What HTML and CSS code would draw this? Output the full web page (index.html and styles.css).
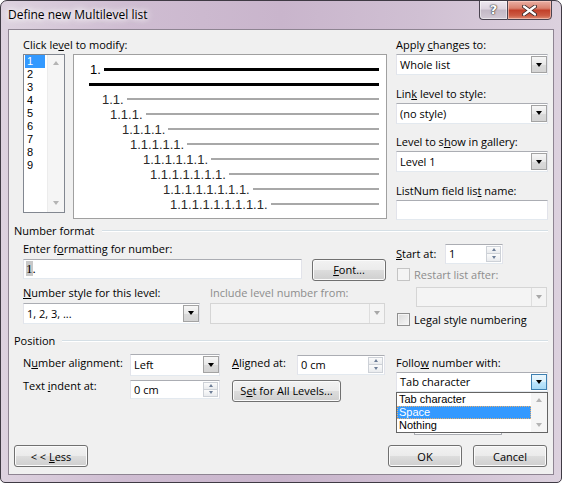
FILE: index.html
```html
<!DOCTYPE html>
<html>
<head>
<meta charset="utf-8">
<title>Define new Multilevel list</title>
<link rel="stylesheet" href="styles.css">
</head>
<body>
<div class="window">
  <div class="titlebar">
    <span class="title">Define new Multilevel list</span>
    <div class="caption-btns">
      <div class="cbtn help"><span>?</span></div>
      <div class="cbtn close">
        <svg width="15" height="11" viewBox="0 0 15 11"><path d="M2 1.5 L13 9.5 M13 1.5 L2 9.5" stroke="#3a2a2a" stroke-width="4" stroke-linecap="round" fill="none"/><path d="M2 1.5 L13 9.5 M13 1.5 L2 9.5" stroke="#ffffff" stroke-width="2.2" stroke-linecap="round" fill="none"/></svg>
      </div>
    </div>
  </div>
  <div class="client">
    <div class="top">
      <div class="levels">
        <div class="lbl">Click le<u>v</u>el to modify:</div>
        <div class="levels-row">
          <div class="listbox">
            <div class="items">
              <div class="item sel">1</div>
              <div class="item">2</div>
              <div class="item">3</div>
              <div class="item">4</div>
              <div class="item">5</div>
              <div class="item">6</div>
              <div class="item">7</div>
              <div class="item">8</div>
              <div class="item">9</div>
            </div>
            <div class="vscroll"><i class="sa up"></i><i class="sa dn"></i></div>
          </div>
          <div class="preview">
            <div class="pr p1"><span class="n first">1.</span><span class="ln black"></span></div>
            <div class="pr p2"><span class="ln black"></span></div>
            <div class="pr p3"><span class="n">1.1.</span><span class="ln"></span></div>
            <div class="pr p4"><span class="n">1.1.1.</span><span class="ln"></span></div>
            <div class="pr p5"><span class="n">1.1.1.1.</span><span class="ln"></span></div>
            <div class="pr p6"><span class="n">1.1.1.1.1.</span><span class="ln"></span></div>
            <div class="pr p7"><span class="n">1.1.1.1.1.1.</span><span class="ln"></span></div>
            <div class="pr p8"><span class="n">1.1.1.1.1.1.1.</span><span class="ln"></span></div>
            <div class="pr p9"><span class="n">1.1.1.1.1.1.1.1.</span><span class="ln"></span></div>
            <div class="pr p10"><span class="n">1.1.1.1.1.1.1.1.1.</span><span class="ln"></span></div>
          </div>
        </div>
      </div>
      <div class="side">
        <div class="field">
          <div class="lbl">Apply <u>c</u>hanges to:</div>
          <div class="combo"><span class="val">Whole list</span><span class="drop"></span></div>
        </div>
        <div class="field">
          <div class="lbl">Lin<u>k</u> level to style:</div>
          <div class="combo"><span class="val">(no style)</span><span class="drop"></span></div>
        </div>
        <div class="field">
          <div class="lbl">Level to s<u>h</u>ow in gallery:</div>
          <div class="combo"><span class="val">Level 1</span><span class="drop"></span></div>
        </div>
        <div class="field">
          <div class="lbl">ListNum field lis<u>t</u> name:</div>
          <div class="textbox listnum"></div>
        </div>
      </div>
    </div>

    <div class="group-head"><span>Number format</span><i></i></div>
    <div class="nf">
      <div class="nf-left">
        <div class="lbl">Enter f<u>o</u>rmatting for number:</div>
        <div class="fmt-row">
          <div class="textbox fmt"><span class="hl">1</span>.</div>
          <div class="btn font-btn"><u>F</u>ont...</div>
        </div>
        <div class="style-row">
          <div class="col">
            <div class="lbl"><u>N</u>umber style for this level:</div>
            <div class="combo"><span class="val">1, 2, 3, ...</span><span class="drop"></span></div>
          </div>
          <div class="col">
            <div class="lbl disabled">Include level number from:</div>
            <div class="combo dis"><span class="val"></span><span class="ddrop"></span></div>
          </div>
        </div>
      </div>
      <div class="nf-right">
        <div class="start-row">
          <div class="lbl start-lbl"><u>S</u>tart at:</div>
          <div class="spin start"><span class="val">1</span><div class="sb"><i class="up"></i><i class="dn"></i></div></div>
        </div>
        <div class="check-row restart">
          <span class="cb dis"></span><span class="lbl disabled">Restart list after:</span>
        </div>
        <div class="combo dis restart-combo"><span class="val"></span><span class="ddrop"></span></div>
        <div class="check-row legal">
          <span class="cb"></span><span class="lbl">Le<u>g</u>al style numbering</span>
        </div>
      </div>
    </div>

    <div class="group-head pos-head"><span>Position</span><i></i></div>
    <div class="pos">
      <div class="pos-left">
        <div class="pos-row r1">
          <div class="lbl w107">N<u>u</u>mber alignment:</div>
          <div class="combo align"><span class="val">Left</span><span class="drop"></span></div>
          <div class="lbl w65"><u>A</u>ligned at:</div>
          <div class="spin aligned"><span class="val">0 cm</span><div class="sb"><i class="up"></i><i class="dn"></i></div></div>
        </div>
        <div class="pos-row r2">
          <div class="lbl w107 up2">Text <u>i</u>ndent at:</div>
          <div class="spin indent"><span class="val">0 cm</span><div class="sb"><i class="up"></i><i class="dn"></i></div></div>
          <div class="btn setall">S<u>e</u>t for All Levels...</div>
        </div>
      </div>
      <div class="pos-right">
        <div class="lbl follow-lbl">Follo<u>w</u> number with:</div>
        <div class="combo follow">
          <span class="val">Tab character</span><span class="drop hot"></span>
          <div class="dropdown">
            <div class="dd-items">
              <div class="dd-item">Tab character</div>
              <div class="dd-item sel">Space</div>
              <div class="dd-item">Nothing</div>
            </div>
            <div class="dd-scroll"><i class="sa up"></i><i class="sa dn"></i></div>
          </div>
        </div>
        <div class="hidden-box"></div>
      </div>
    </div>

    <div class="bottom">
      <div class="btn">&lt;&nbsp;&lt;&nbsp;<u>L</u>ess</div>
      <div class="right-btns">
        <div class="btn">OK</div>
        <div class="btn">Cancel</div>
      </div>
    </div>
  </div>
</div>
</body>
</html>
```

FILE: styles.css
```css
* { box-sizing: border-box; }
html, body { margin: 0; padding: 0; }
body {
  width: 562px;
  height: 483px;
  font-family: "Open Sans", "Noto Sans", sans-serif;
  font-size: 11px;
  color: #000;
  background: #ffffff;
}
u { text-decoration: underline; text-underline-offset: 1px; }

.window {
  width: 562px;
  height: 483px;
  border: 1px solid #3f3a44;
  border-radius: 7px 7px 5px 5px;
  padding: 0 7px 7px;
  background: linear-gradient(90deg, #ddd2df 0%, #cfbdd2 22%, #c9b5cc 50%, #d0c0d3 75%, #dcd1de 100%);
  display: flex;
  flex-direction: column;
  overflow: hidden;
}

.titlebar {
  height: 28px;
  display: flex;
  justify-content: space-between;
  align-items: flex-start;
}
.title {
  margin-top: 6px;
  font-size: 12px;
  line-height: 16px;
  color: #000;
  text-shadow: 0 0 5px #fff, 0 0 8px #fff, 0 0 10px #fff;
}
.caption-btns {
  display: flex;
  margin-top: -1px;
  margin-right: 2px;
}
.cbtn {
  height: 20px;
  border: 1px solid #4a4350;
  display: flex;
  align-items: center;
  justify-content: center;
}
.help {
  width: 28px;
  border-right: none;
  border-radius: 0 0 0 4px;
  background: linear-gradient(#efe9f0 0%, #dcd3de 45%, #c3b8c6 50%, #d2c9d4 100%);
  box-shadow: inset 0 0 0 1px rgba(255,255,255,0.5);
}
.help span {
  font-family: "DejaVu Sans", sans-serif;
  font-weight: bold;
  font-size: 13px;
  line-height: 14px;
  color: #fff;
  text-shadow: 0 0 1px #333, 0 0 1px #333, 0 0 2px #555;
}
.close {
  width: 45px;
  border-radius: 0 0 4px 0;
  background: linear-gradient(#eab0a4 0%, #d9826f 40%, #c2402a 52%, #cc5a43 80%, #dd8b73 100%);
  box-shadow: inset 0 0 0 1px rgba(255,210,200,0.6);
}
.close svg { display: block; }

.client {
  height: 446px;
  border: 1px solid #8e8492;
  background: #f0f0f0;
  padding: 7px 5px 0 5px;
  display: flex;
  flex-direction: column;
}

.lbl {
  height: 15px;
  line-height: 15px;
  white-space: nowrap;
}
.disabled { color: #8d8d8d; }

/* top section */
.top {
  display: flex;
  gap: 9px;
  margin-left: 9px;
}
.levels { width: 364px; }
.levels-row {
  display: flex;
  gap: 8px;
  margin-top: 2px;
  align-items: flex-start;
}
.listbox {
  width: 42px;
  height: 159px;
  border: 1px solid #828790;
  background: #fff;
  display: flex;
  gap: 2px;
}
.items {
  width: 21px;
  padding-left: 1px;
}
.item {
  height: 13px;
  line-height: 13px;
  padding-left: 2px;
  font-family: "Liberation Sans", Arial, sans-serif;
  font-size: 11px;
}
.item.sel { background: #3399ff; color: #fff; }
.vscroll {
  width: 17px;
  background: #f5f5f5;
  border-left: 1px solid #ececec;
  display: flex;
  flex-direction: column;
  justify-content: space-between;
  align-items: center;
  padding: 6px 0 7px;
}
.sa { display: block; width: 0; height: 0; border-left: 3.5px solid transparent; border-right: 3.5px solid transparent; }
.sa.up { border-bottom: 4px solid #b4b4b4; }
.sa.dn { border-top: 4px solid #b4b4b4; }

.preview {
  width: 314px;
  height: 165px;
  border: 1px solid #a0a0a0;
  background: #fff;
  padding: 6.5px 7px 0 0;
}
.pr {
  height: 15px;
  display: flex;
  align-items: center;
  gap: 3px;
}
.pr .n {
  font-family: "Liberation Sans", Arial, sans-serif;
  font-size: 13px;
  line-height: 15px;
  color: #2a2a2a;
  white-space: nowrap;
}
.pr .n.first { color: #000; }
.pr .ln { flex: 1; height: 2px; background: #a8a8a8; }
.pr .ln.black { height: 3px; background: #000; }
.p1 { padding-left: 16px; }
.p2 { padding-left: 15px; }
.p3 { padding-left: 28px; }
.p4 { padding-left: 36px; }
.p5 { padding-left: 48px; }
.p6 { padding-left: 56px; }
.p7 { padding-left: 69px; }
.p8 { padding-left: 76px; }
.p9 { padding-left: 89px; }
.p10 { padding-left: 96px; }

.side {
  width: 152px;
  display: flex;
  flex-direction: column;
  gap: 10.5px;
}
.field .combo, .field .textbox { margin-top: 2px; }

/* controls */
.combo {
  position: relative;
  height: 21px;
  border: 1px solid #abadb3;
  border-color: #abadb3 #e2e3ea #e3e9ef #e2e3ea;
  background: #fff;
  display: flex;
  align-items: center;
}
.combo .val {
  flex: 1;
  padding-left: 3px;
  line-height: 19px;
  white-space: nowrap;
}
.combo .drop {
  width: 16px;
  height: 17px;
  border: 1px solid #a3a3a3;
  background: linear-gradient(#f7f7f7, #e8e8e8 50%, #dadada 51%, #d4d4d4);
  display: flex;
  align-items: center;
  justify-content: center;
}
.combo .drop::after {
  content: "";
  border-left: 3.5px solid transparent;
  border-right: 3.5px solid transparent;
  border-top: 4px solid #000;
}
.combo .drop.hot {
  border-color: #3c7fb1;
  background: linear-gradient(#eaf6fd, #d9f0fc 50%, #bee6fd 51%, #a7d9f5);
}
.combo.dis {
  background: #f4f4f4;
  border: 1px solid #d5d5d5;
  align-items: stretch;
}
.combo .ddrop {
  width: 15px;
  border-left: 1px solid #dedede;
  display: flex;
  align-items: center;
  justify-content: center;
}
.combo .ddrop::after {
  content: "";
  border-left: 3.5px solid transparent;
  border-right: 3.5px solid transparent;
  border-top: 4px solid #a8a8a8;
}

.textbox {
  height: 20px;
  border: 1px solid #abadb3;
  border-color: #abadb3 #e2e3ea #e3e9ef #e2e3ea;
  background: #fff;
}

.btn {
  height: 22px;
  border: 1px solid #707070;
  border-radius: 3px;
  background: linear-gradient(#f2f2f2 0%, #ebebeb 49%, #dddddd 50%, #cfcfcf 100%);
  box-shadow: inset 0 0 0 1px #fbfbfb;
  display: flex;
  align-items: center;
  justify-content: center;
  white-space: nowrap;
  line-height: 15px;
}

.spin {
  height: 20px;
  border: 1px solid #abadb3;
  border-color: #abadb3 #e2e3ea #e3e9ef #e2e3ea;
  background: #fff;
  display: flex;
  align-items: stretch;
}
.spin .val {
  flex: 1;
  padding-left: 3px;
  line-height: 18px;
}
.sb {
  width: 16px;
  display: flex;
  flex-direction: column;
  padding: 1px 1px 1px 0;
}
.sb i {
  flex: 1;
  border: 1px solid #cdd1d7;
  background: linear-gradient(#fbfbfb, #e9ebee);
  display: flex;
  align-items: center;
  justify-content: center;
}
.sb i + i { margin-top: -1px; }
.sb i::after {
  content: "";
  border-left: 2.5px solid transparent;
  border-right: 2.5px solid transparent;
}
.sb .up::after { border-bottom: 3px solid #6d7d97; }
.sb .dn::after { border-top: 3px solid #6d7d97; }

.cb {
  width: 13px;
  height: 13px;
  border: 1px solid #8f8f8f;
  background: linear-gradient(135deg, #dadada, #f7f7f7);
  box-shadow: inset 0 0 0 1px #f4f4f4;
  flex: none;
}
.cb.dis { border-color: #c4c4c4; background: #f4f4f4; box-shadow: none; }

/* group headers */
.group-head {
  margin-top: 3.5px;
  height: 15px;
  display: flex;
  align-items: center;
  gap: 7px;
}
.group-head span { line-height: 15px; white-space: nowrap; }
.group-head i {
  flex: 1;
  height: 2px;
  border-top: 1px solid #d5dfe5;
  border-bottom: 1px solid #ffffff;
  margin-top: 1px;
}

/* number format */
.nf {
  height: 95px;
  display: flex;
  gap: 9px;
  margin-left: 9px;
}
.nf-left { width: 364px; padding-top: 3px; }
.fmt-row {
  display: flex;
  gap: 10px;
  margin-top: 2.5px;
  align-items: flex-start;
}
.fmt {
  width: 279px;
  padding-left: 2px;
  font-family: "Liberation Serif", serif;
  font-size: 13px;
  line-height: 18px;
}
.fmt .hl { background: #c8c8c8; }
.font-btn { width: 74px; height: 22px; }
.style-row {
  display: flex;
  gap: 10px;
  margin-top: 4.5px;
}
.style-row .col:first-child { width: 177px; }
.style-row .col:last-child { width: 175px; }
.style-row .combo { margin-top: 2.5px; }

.nf-right { width: 152px; padding-top: 5.5px; }
.start-row { display: flex; align-items: center; }
.start-lbl { width: 49px; }
.spin.start { width: 58px; }
.check-row {
  display: flex;
  align-items: center;
  gap: 4px;
  height: 15px;
  padding-left: 1px;
}
.check-row.restart { margin-top: 3.5px; }
.restart-combo { margin-top: 4.5px; margin-left: 20px; width: 131px; height: 20px; }
.check-row.legal { margin-top: 5px; }

/* position */
.pos-head { margin-top: 0; }
.pos {
  display: flex;
  gap: 9px;
  margin-left: 9px;
}
.pos-left { width: 364px; padding-top: 5.5px; }
.pos-row { display: flex; align-items: flex-start; }
.pos-row.r2 { margin-top: 4px; }
.w107 { width: 107px; margin-top: 1.5px; }
.w65 { width: 65px; margin-top: 1.5px; }
.up2 { margin-top: -1.5px; }
.combo.align { width: 90px; height: 22px; margin-right: 12px; }
.spin.aligned { width: 88px; margin-top: 1px; }
.spin.indent { width: 90px; height: 19px; margin-right: 12px; }
.setall { width: 109px; }

.pos-right { width: 152px; padding-top: 7px; }
.follow-lbl { margin-bottom: 1.5px; }
.combo.follow { height: 20px; z-index: 2; }
.combo.follow .drop { height: 16px; }
.dropdown {
  position: absolute;
  left: -1px;
  right: -1px;
  top: 19px;
  height: 41px;
  border: 1px solid #646464;
  background: #fff;
  display: flex;
  z-index: 3;
}
.dd-items { flex: 1; }
.dd-item {
  height: 13px;
  line-height: 13px;
  padding-left: 2px;
  white-space: nowrap;
  font-family: "Liberation Sans", Arial, sans-serif;
  font-size: 11px;
}
.dd-item.sel {
  background: #3399ff;
  color: #fff;
  outline: 1px dotted #e8b070;
  outline-offset: -1px;
}
.dd-scroll {
  width: 16px;
  background: #f5f5f5;
  display: flex;
  flex-direction: column;
  justify-content: space-between;
  align-items: center;
  padding: 5px 0 5px;
}
.hidden-box {
  margin-top: 23px;
  margin-left: 18px;
  width: 88px;
  height: 20px;
  border: 1px solid #abadb3;
  background: #fff;
}

.bottom {
  margin-top: auto;
  padding: 0 1px 7px 0;
  display: flex;
  justify-content: space-between;
}
.bottom .btn { width: 74px; }
.right-btns { display: flex; gap: 11px; }
```
